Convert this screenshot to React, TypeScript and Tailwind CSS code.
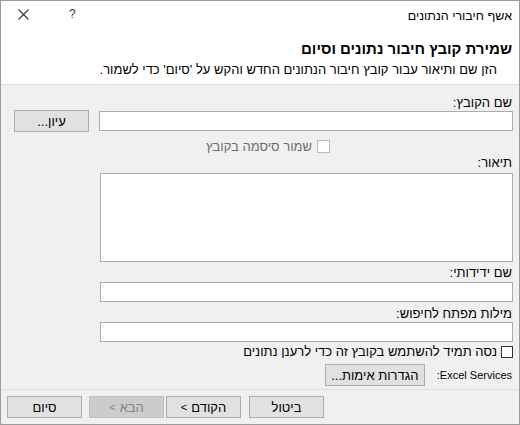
const font = { fontFamily: '"Liberation Sans", "DejaVu Sans", Arial, sans-serif' };

function Btn({ children, disabled, className = "" }: { children: React.ReactNode; disabled?: boolean; className?: string }) {
  return (
    <button
      type="button"
      disabled={disabled}
      className={`flex h-[22px] w-[75px] shrink-0 items-center justify-center gap-[4px] border text-[13px] leading-none ${
        disabled ? "border-[#bfbfbf] bg-[#cccccc] text-[#838383]" : "border-[#adadad] bg-[#e1e1e1] text-black"
      } ${className}`}
    >
      {children}
    </button>
  );
}

function Field({ className = "" }: { className?: string }) {
  return <div className={`w-full border border-[#abadb3] bg-white ${className}`} />;
}

export default function App() {
  return (
    <div
      dir="rtl"
      style={font}
      className="flex h-[425px] w-[520px] flex-col border border-[#9b9b9b] bg-[#f0f0f0] text-[13px] text-black"
    >
      {/* header */}
      <div className="h-[84px] shrink-0 border-b border-[#dfdfdf] bg-white">
        <div className="flex h-[31px] items-center justify-between pr-[7px] pl-[17px]">
          <span className="text-[12.5px]">אשף חיבורי הנתונים</span>
          <div dir="ltr" className="mb-[5px] flex items-center">
            <svg width="11" height="11" viewBox="0 0 11 11">
              <path d="M0.5 0.5L10.5 10.5M10.5 0.5L0.5 10.5" stroke="#333" strokeWidth="1.1" />
            </svg>
            <span className="ml-[40px] text-[12px] leading-none text-[#333]">?</span>
          </div>
        </div>
        <div className="mt-[8px] pr-[7px] text-[15px] font-bold leading-[18px]">שמירת קובץ חיבור נתונים וסיום</div>
        <div className="mt-[4px] pr-[22px] leading-[15px]">הזן שם ותיאור עבור קובץ חיבור הנתונים החדש והקש על 'סיום' כדי לשמור.</div>
      </div>

      {/* body */}
      <div className="flex flex-1 flex-col pr-[6px] pl-[13px] pt-[10px]">
        <div className="pr-px leading-[15px]">שם הקובץ:</div>
        <div className="flex h-[22px] items-center gap-[10px]">
          <Field className="h-[20px] flex-1" />
          <Btn>עיון...</Btn>
        </div>
        <div className="mt-[7px] flex h-[15px] items-center pr-[183px]">
          <span className="h-[13px] w-[13px] border border-[#bcbcbc] bg-white" />
          <span className="mr-[5px] text-[#6d6d6d] leading-[15px]">שמור סיסמה בקובץ</span>
        </div>
        <div className="mt-[1px] pr-px leading-[15px]">תיאור:</div>
        <div className="mt-[3px] pl-[86px]">
          <Field className="h-[89px]" />
        </div>
        <div className="mt-[3px] pr-px leading-[15px]">שם ידידותי:</div>
        <div className="mt-[2px] pl-[86px]">
          <Field className="h-[20px]" />
        </div>
        <div className="mt-[4px] pr-px leading-[15px]">מילות מפתח לחיפוש:</div>
        <div className="mt-[1px] pl-[86px]">
          <Field className="h-[20px]" />
        </div>
        <div className="mt-[2px] flex h-[15px] items-center">
          <span className="h-[12px] w-[12px] border border-[#333] bg-white" />
          <span className="mr-[4px] leading-[15px]">נסה תמיד להשתמש בקובץ זה כדי לרענן נתונים</span>
        </div>
        <div className="mt-[5px] flex h-[22px] items-center">
          <span className="pr-px text-[11px]">Excel Services:</span>
          <Btn className="mr-[12px] w-[100px]">הגדרות אימות...</Btn>
        </div>
      </div>

      {/* footer */}
      <div className="h-[35px] shrink-0 border-t border-[#dfdfdf]">
        <div dir="ltr" className="flex pl-[6px] pt-[6px]">
          <Btn>סיום</Btn>
          <Btn disabled className="ml-[7px]">
            <span className="text-[11px]">&lt;</span>
            <span>הבא</span>
          </Btn>
          <Btn className="ml-[2px]">
            <span className="text-[11px]">&lt;</span>
            <span>הקודם</span>
          </Btn>
          <Btn className="ml-[8px]">ביטול</Btn>
        </div>
      </div>
    </div>
  );
}
